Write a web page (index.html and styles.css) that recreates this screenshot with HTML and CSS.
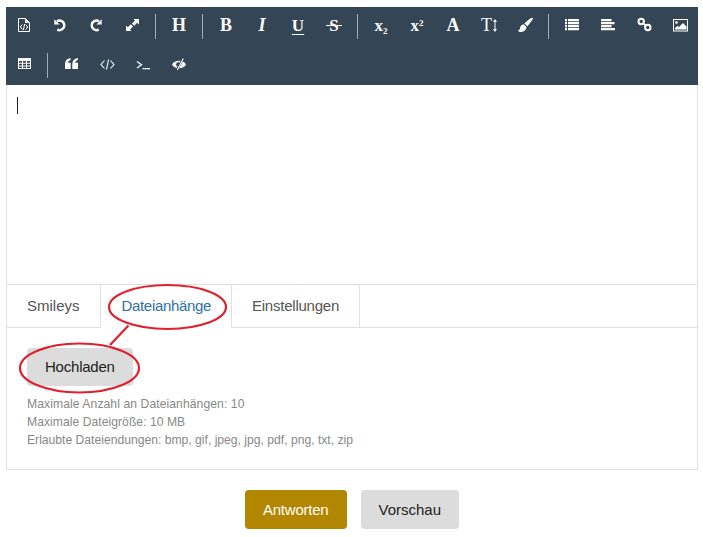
FILE: index.html
```html
<!DOCTYPE html>
<html lang="de">
<head>
<meta charset="utf-8">
<title>Antwort</title>
<link rel="stylesheet" href="styles.css">
</head>
<body>
<div class="page">
  <form class="form">
    <div class="toolbar">
      <span class="tool"><svg class="ico" viewBox="0 0 16 16"><path d="M2.500 1.500h7l4 4v9h-11z" fill="none" stroke="#fff" stroke-width="1"/><path d="M9 1.500v4.500h4.500z" fill="#fff"/><path d="M6.300 7.500L4.300 10l2 2.500M9.700 7.500l2 2.500-2 2.500M8.600 7L7.400 13" fill="none" stroke="#fff" stroke-width="1"/></svg></span>
      <span class="tool"><svg class="ico" viewBox="0 0 16 16"><path d="M5 4.200A4.800 4.800 0 1 1 5.300 12.600" fill="none" stroke="#fff" stroke-width="2.400"/><path d="M2.300 2.200v5.300h5.300z" fill="#fff"/></svg></span>
      <span class="tool"><svg class="ico" viewBox="0 0 16 16"><path d="M11 4.200A4.800 4.800 0 1 0 10.700 12.600" fill="none" stroke="#fff" stroke-width="2.400"/><path d="M13.700 2.200v5.300H8.400z" fill="#fff"/></svg></span>
      <span class="tool"><svg class="ico" viewBox="0 0 16 16"><path d="M9.500 2H15v5.500l-1.800-1.800-3 3L8 6.500l3-3zM7.500 14H2V8.500l1.800 1.800 3-3L9 9.500l-3 3z" fill="#fff"/></svg></span>
      <span class="sep"></span>
      <span class="tool glyph bold">H</span>
      <span class="sep"></span>
      <span class="tool glyph bold">B</span>
      <span class="tool glyph bold ital">I</span>
      <span class="tool glyph"><span class="under">U</span></span>
      <span class="tool glyph"><span class="strike">S</span></span>
      <span class="sep"></span>
      <span class="tool glyph bold small"><span>x<sub>2</sub></span></span>
      <span class="tool glyph bold small"><span>x<sup>2</sup></span></span>
      <span class="tool glyph bold">A</span>
      <span class="tool glyph sizer">T<svg class="arrow" viewBox="0 0 4 13"><path d="M2 2v9" stroke="#fff" stroke-width="1"/><path d="M0 3L2 0l2 3zM0 10l2 3 2-3z" fill="#fff"/></svg></span>
      <span class="tool"><svg class="ico" viewBox="0 0 16 16"><path d="M15.600.9c.5.4.2 1.300-.4 2.200C13.900 5.100 11.700 8 10.300 9.300L7.400 6.500C8.800 5 12.100 2.400 13.700 1.200c.8-.5 1.400-.7 1.900-.3z" fill="#fff"/><path d="M6.600 7.300l2.900 2.800c-.2 2.900-2.500 4.900-5.200 4.900-1.400 0-2.700-.5-3.500-1.500 1.300-.2 2-1 2.200-2.300.3-2 1.600-3.600 3.600-3.900z" fill="#fff"/></svg></span>
      <span class="sep"></span>
      <span class="tool"><svg class="ico" viewBox="0 0 16 16"><path d="M1 2h2v2.200H1zM1 5h2v2.200H1zM1 8h2v2.200H1zM1 11h2v2.200H1zM4 2h11v2.200H4zM4 5h11v2.200H4zM4 8h11v2.200H4zM4 11h11v2.200H4z" fill="#fff"/></svg></span>
      <span class="tool"><svg class="ico" viewBox="0 0 16 16"><path d="M1 2h10.500v2.200H1zM1 5h13.500v2.200H1zM1 8h10.500v2.200H1zM1 11h14v2.200H1z" fill="#fff"/></svg></span>
      <span class="tool"><svg class="ico" viewBox="0 0 16 16"><g fill="none" stroke="#fff" stroke-width="2"><circle cx="5.200" cy="4.500" r="2.700"/><circle cx="11.800" cy="10.500" r="2.700"/><path d="M7 6.500l3 2"/></g></svg></span>
      <span class="tool"><svg class="ico" viewBox="0 0 16 16"><rect x="1.500" y="2.500" width="14" height="11.500" fill="none" stroke="#fff" stroke-width="1"/><circle cx="4.500" cy="5.500" r="1.300" fill="#fff"/><path d="M3 12.500v-1.500l2.500-2 1.500 1L11 6l3.500 3.500v3z" fill="#fff"/></svg></span>
      <span class="tool"><svg class="ico" viewBox="0 0 16 16"><path d="M2 2h13v11H2z" fill="#fff"/><path d="M3 5h3v1.700H3zM7 5h3v1.700H7zM11 5h3v1.700h-3zM3 7.700h3v1.700H3zM7 7.700h3v1.700H7zM11 7.700h3v1.700h-3zM3 10.400h3V12H3zM7 10.400h3V12H7zM11 10.400h3V12h-3z" fill="#344556"/></svg></span>
      <span class="sep"></span>
      <span class="tool"><svg class="ico" viewBox="0 0 16 16"><path d="M2 8C2 4.700 3.800 2.700 7.500 2v2.300C5.900 4.700 5.100 5.400 5 6.800h2.700V13H2zM9.300 8c0-3.300 1.800-5.300 5.500-6v2.300c-1.600.4-2.400 1.100-2.500 2.500H15V13H9.300z" fill="#fff"/></svg></span>
      <span class="tool"><svg class="ico" viewBox="0 0 16 16"><path d="M5.500 4.500L2 8.500l3.500 4M11.500 4.500L15 8.500l-3.500 4M9.500 3.500L7.500 13.500" fill="none" stroke="#fff" stroke-width="1.100"/></svg></span>
      <span class="tool"><svg class="ico" viewBox="0 0 16 16"><path d="M2 5.500L6.500 8.800 2 12.100" fill="none" stroke="#fff" stroke-width="1.300"/><path d="M7.500 12h7.500v1.300H7.500z" fill="#fff"/></svg></span>
      <span class="tool"><svg class="ico" viewBox="0 0 16 16"><path d="M1 8.500C2.500 6 4.800 4.800 8 4.800s5.500 1.200 7 3.700c-1.500 2.500-3.800 3.700-7 3.700S2.500 11 1 8.500z" fill="#fff"/><circle cx="7.300" cy="8.500" r="2.200" fill="#344556"/><path d="M12 2.500L6 14" stroke="#344556" stroke-width="2.400"/><path d="M12.300 2.500L6.300 14" stroke="#fff" stroke-width="1.100"/></svg></span>
    </div>

    <div class="editor"><span class="caret"></span></div>

    <div class="tabs">
      <span class="tab">Smileys</span>
      <span class="tab active">Dateianhänge</span>
      <span class="tab settings">Einstellungen</span>
    </div>

    <div class="panel">
      <button type="button" class="btn upload">Hochladen</button>
      <ul class="notes">
        <li class="note-count">Maximale Anzahl an Dateianhängen: 10</li>
        <li class="note-size">Maximale Dateigröße: 10 MB</li>
        <li>Erlaubte Dateiendungen: bmp, gif, jpeg, jpg, pdf, png, txt, zip</li>
      </ul>
    </div>

    <div class="actions">
      <button type="button" class="btn primary">Antworten</button>
      <button type="button" class="btn">Vorschau</button>
    </div>
  </form>

  <svg class="marks" viewBox="0 0 703 537" width="703" height="537">
    <g fill="none" stroke="#e0202e" stroke-width="2.200">
      <ellipse cx="167.500" cy="307" rx="58.500" ry="22"/>
      <ellipse cx="79.500" cy="368" rx="59.500" ry="24.500"/>
      <path d="M128.500 325.500L110 345"/>
    </g>
  </svg>
</div>
</body>
</html>
```

FILE: styles.css
```css
* { box-sizing: border-box; }
html, body { margin: 0; padding: 0; background: #fff; }
body { font-family: "Liberation Sans", Arial, sans-serif; color: #333; overflow: hidden; }

.page { position: relative; width: 703px; height: 537px; padding: 7px 5px 0 6px; }

.toolbar {
  display: flex;
  flex-wrap: wrap;
  align-items: center;
  align-content: flex-start;
  height: 78px;
  background: #344556;
  color: #fff;
}
.tool {
  display: flex;
  align-items: center;
  justify-content: center;
  width: 36px;
  height: 39px;
  padding-bottom: 3px;
}
.ico { width: 16px; height: 16px; display: block; }
.sep { width: 1px; height: 25px; margin: 0 5px; background: #a3adb8; }

.glyph { font-family: "Liberation Serif", "Times New Roman", serif; font-size: 18px; line-height: 1; }
.bold { font-weight: 700; }
.ital { font-style: italic; }
.under { font-size: 17px; font-weight: 700; text-decoration: underline; text-underline-offset: 3px; text-decoration-thickness: 1px; }
.strike { position: relative; font-size: 17px; font-weight: 700; }
.strike::after {
  content: "";
  position: absolute;
  left: -3px;
  right: -3px;
  top: 8px;
  height: 1px;
  background: #fff;
}
.small { font-size: 17px; }
.small sub, .small sup { font-size: 9px; line-height: 0; }
.small sub { vertical-align: -3px; }
.small sup { vertical-align: 5px; }
.sizer { font-size: 18px; font-weight: 400; gap: 1px; }
.arrow { width: 4px; height: 13px; display: block; }

.editor {
  height: 200px;
  padding: 12px 10px;
  border: 1px solid #e0e0e0;
  border-width: 0 1px 1px;
}
.caret { display: block; width: 1px; height: 17px; background: #222; }

.tabs {
  display: flex;
  height: 43px;
  border: 1px solid #e0e0e0;
  border-width: 0 1px 1px;
}
.tab {
  height: 43px;
  padding: 0 20px;
  font-size: 15px;
  line-height: 41px;
  color: #555;
  border-right: 1px solid #e0e0e0;
}
.tab.active { background: #fff; color: #2f6fa8; letter-spacing: -.33px; padding-left: 21px; }
.tab.settings { letter-spacing: -.23px; }

.panel {
  height: 142px;
  padding: 20px 20px 0;
  border: 1px solid #e0e0e0;
  border-top: 0;
}
.btn {
  display: block;
  height: 39px;
  padding: 0 18px;
  border: 0;
  border-radius: 4px;
  background: #dcdcdc;
  color: #222;
  font: 15px "Liberation Sans", Arial, sans-serif;
}
.btn.upload { height: 38px; padding-bottom: 2px; letter-spacing: -.22px; }
.btn.primary { background: #b38600; color: #fff; letter-spacing: -.22px; }

.notes {
  list-style: none;
  margin: 9px 0 0;
  padding: 0;
  font-size: 12.150px;
  line-height: 18px;
  color: #888;
}
.note-count { letter-spacing: .08px; }
.note-size { letter-spacing: .04px; }

.actions { display: flex; justify-content: center; gap: 14px; margin-top: 20px; }

.marks { position: absolute; left: 0; top: 0; pointer-events: none; }
```
